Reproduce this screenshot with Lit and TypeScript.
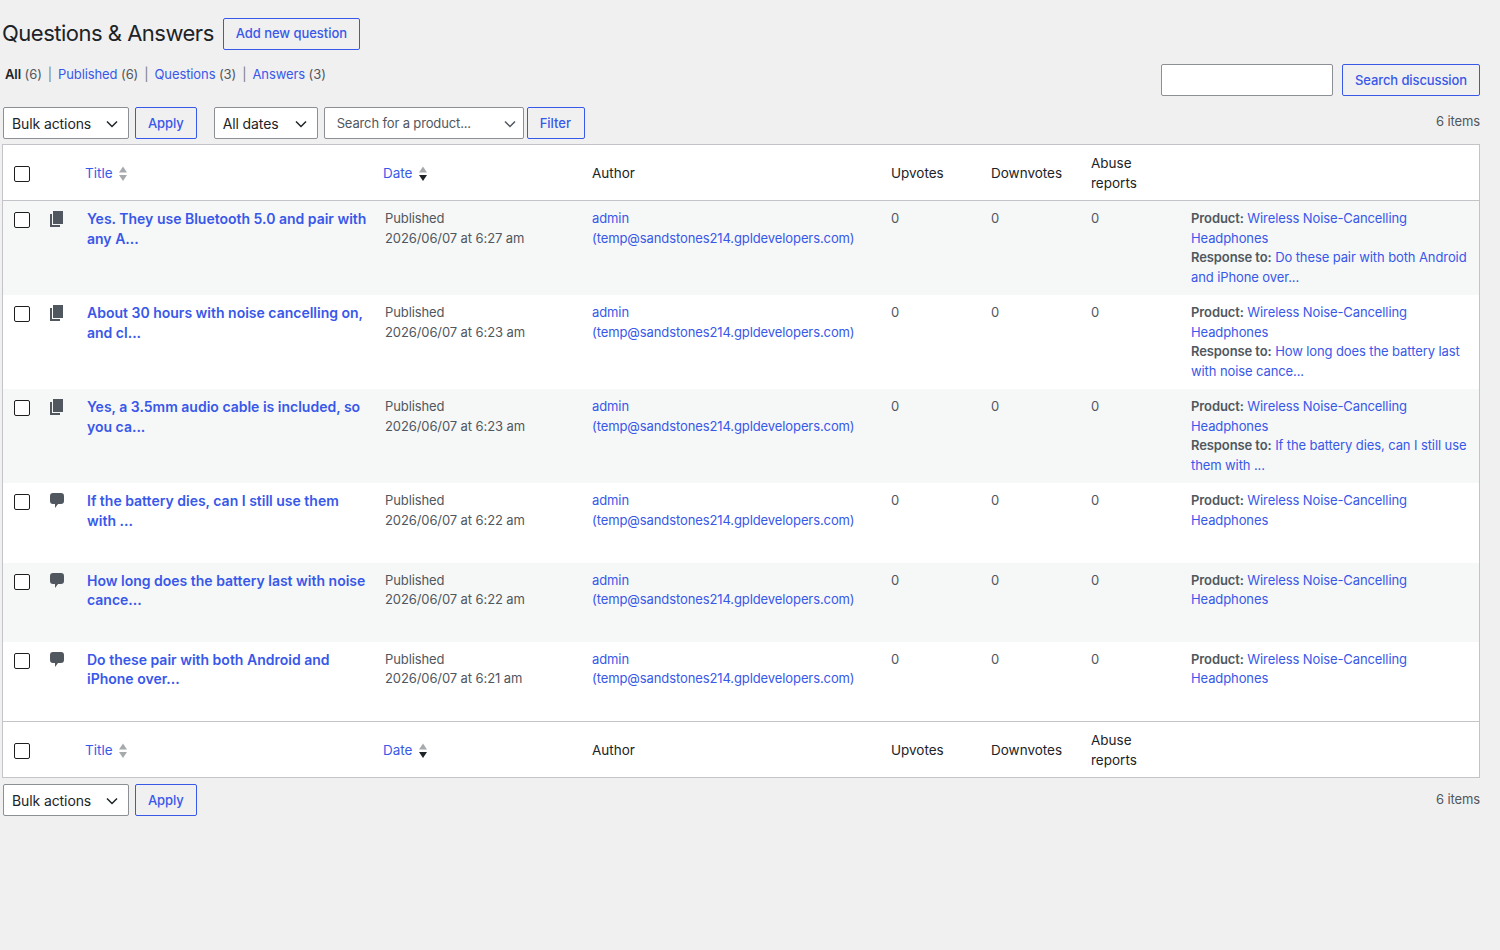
import { LitElement, html, css, svg } from 'lit';
import { customElement } from 'lit/decorators.js';

type Row = { kind: 'answer' | 'question'; title: string; date: string; response?: string };

const rows: Row[] = [
  { kind: 'answer', title: 'Yes. They use Bluetooth 5.0 and pair with any A...', date: '2026/06/07 at 6:27 am', response: 'Do these pair with both Android and iPhone over...' },
  { kind: 'answer', title: 'About 30 hours with noise cancelling on, and cl...', date: '2026/06/07 at 6:23 am', response: 'How long does the battery last with noise cance...' },
  { kind: 'answer', title: 'Yes, a 3.5mm audio cable is included, so you ca...', date: '2026/06/07 at 6:23 am', response: 'If the battery dies, can I still use them with ...' },
  { kind: 'question', title: 'If the battery dies, can I still use them with ...', date: '2026/06/07 at 6:22 am' },
  { kind: 'question', title: 'How long does the battery last with noise cance...', date: '2026/06/07 at 6:22 am' },
  { kind: 'question', title: 'Do these pair with both Android and iPhone over...', date: '2026/06/07 at 6:21 am' },
];

const chevron = html`<svg class="chev" width="12" height="8" viewBox="0 0 12 8"><path d="M1 1.5l5 5 5-5" fill="none" stroke="currentColor" stroke-width="1.5"/></svg>`;

const sortIcon = (active: boolean) => html`<svg class="sort" width="10" height="16" viewBox="0 0 10 16">
  ${svg`<path d="M5 0.5l4 6H1z" fill="#a7aaad"/><path d="M5 15l-4-6h8z" fill=${active ? '#1d2327' : '#a7aaad'}/>`}
</svg>`;

const pageIcon = html`<svg class="type" width="20" height="20" viewBox="0 0 20 20"><path d="M6 15V2h10v13H6zm-1 1h8v2H3V5h2v11z" fill="#50575e"/></svg>`;
const bubbleIcon = html`<svg class="type" width="20" height="20" viewBox="0 0 20 20"><path d="M3 5a3 3 0 0 1 3-3h8a3 3 0 0 1 3 3v5a3 3 0 0 1-3 3h-3l-3 4v-4H6a3 3 0 0 1-3-3z" fill="#50575e"/></svg>`;

@customElement('app-root')
export class AppRoot extends LitElement {
  static styles = css`
    :host {
      display: block;
      min-height: 950px;
      background: #f0f0f1;
      font-family: Inter, "Liberation Sans", sans-serif;
      font-size: 13px;
      letter-spacing: -0.1px;
      line-height: 19.5px;
      color: #50575e;
    }

    .wrap {
      padding: 18px 20px 0 2px;
    }

    a {
      color: #3858e9;
      text-decoration: none;
    }

    .head {
      display: flex;
      align-items: center;
      gap: 9px;
    }

    h1 {
      margin: 0;
      padding-bottom: 2px;
      font-size: 22px;
      letter-spacing: -0.5px;
      font-weight: 400;
      line-height: 30px;
      color: #1d2327;
    }

    .btn {
      box-sizing: border-box;
      display: inline-flex;
      align-items: center;
      height: 32px;
      padding: 1px 12px 0;
      border: 1px solid #3858e9;
      border-radius: 2px;
      color: #3858e9;
      font-weight: 500;
      white-space: nowrap;
    }

    .head .btn {
      padding-top: 0;
      letter-spacing: -0.05px;
    }

    .btn.filter {
      letter-spacing: 0;
      padding-right: 13px;
    }

    .sub-row {
      display: flex;
      justify-content: space-between;
      margin-top: 14px;
    }

    .subsub {
      padding: 0 0 0 3px;
      margin-top: 1px;
      display: flex;
      gap: 6px;
    }

    .subsub b {
      color: #1d2327;
      font-weight: 600;
    }

    .subsub .sep {
      color: #787c82;
    }

    .search {
      display: flex;
      gap: 9px;
    }

    .search .field {
      box-sizing: border-box;
      width: 172px;
      height: 32px;
      background: #fff;
      border: 1px solid #8c8f94;
      border-radius: 2px;
    }

    .nav {
      display: flex;
      justify-content: space-between;
      padding-left: 1px;
    }

    .nav.top {
      margin-top: 11px;
      margin-bottom: 5px;
    }

    .nav.bottom {
      margin-top: 6px;
    }

    .left {
      display: flex;
      gap: 6px;
    }

    .count {
      margin-top: 5px;
    }

    .bottom .count {
      margin-top: 6px;
    }

    .select {
      box-sizing: border-box;
      display: flex;
      align-items: center;
      justify-content: space-between;
      height: 32px;
      padding: 1px 10px 0 8px;
      background: #fff;
      border: 1px solid #8c8f94;
      border-radius: 2px;
      color: #1d2327;
      font-size: 14px;
    }

    .select .chev {
      color: #1d2327;
    }

    .bulk { width: 126px; }
    .dates { width: 104px; margin-left: 11px; }

    .product {
      width: 200px;
      margin-right: -3px;
      padding: 1px 7px 0 12px;
      font-size: 13px;
      letter-spacing: -0.14px;
      color: #50575e;
    }

    .product .chev {
      color: #50575e;
    }

    table {
      box-sizing: border-box;
      width: 1478px;
      table-layout: fixed;
      border-collapse: separate;
      border-spacing: 0;
      background: #fff;
      border: 1px solid #c3c4c7;
    }

    th {
      height: 55px;
      box-sizing: border-box;
      padding: 9px 10px 7px;
      text-align: left;
      font-weight: 400;
      color: #1d2327;
      font-size: 13.5px;
      letter-spacing: 0;
    }

    thead th {
      border-bottom: 1px solid #c3c4c7;
    }

    tfoot th {
      border-top: 1px solid #c3c4c7;
    }

    th.sorted {
      padding: 0;
    }

    th.sorted a {
      display: flex;
      align-items: center;
      gap: 5px;
      padding: 9px 8px 7px;
    }

    th.sorted a.date {
      gap: 6px;
    }

    .sort {
      flex: none;
    }

    td {
      padding: 8px 10px;
      vertical-align: top;
      word-wrap: break-word;
    }

    tbody tr:nth-child(odd) {
      background: #f6f7f7;
    }

    th.check {
      padding: 2px 0 0 11px;
      vertical-align: middle;
    }

    td.check {
      padding: 11px 0 0 11px;
      vertical-align: top;
    }

    input[type="checkbox"] {
      display: block;
      appearance: none;
      box-sizing: border-box;
      width: 16px;
      height: 16px;
      margin: 0;
      background: #fff;
      border: 1px solid #1e1e1e;
      border-radius: 2px;
    }

    td.kind {
      padding: 8px 0 0 8px;
    }

    .type {
      display: block;
    }

    td.title {
      font-size: 14px;
      letter-spacing: 0;
      font-weight: 600;
      padding-right: 8px;
    }

    .title a {
      display: block;
    }

    .question .title a {
      padding-bottom: 24.3px;
    }

    .question:nth-child(4) .title a {
      padding-bottom: 24.5px;
    }

    .ctx b {
      font-weight: 600;
    }
  `;

  private header() {
    return html`<tr>
      <th class="check"><input type="checkbox" /></th>
      <th></th>
      <th class="sorted"><a href="#">Title ${sortIcon(false)}</a></th>
      <th class="sorted"><a class="date" href="#">Date ${sortIcon(true)}</a></th>
      <th>Author</th>
      <th>Upvotes</th>
      <th>Downvotes</th>
      <th>Abuse reports</th>
      <th></th>
    </tr>`;
  }

  private row(r: Row) {
    return html`<tr class=${r.kind}>
      <td class="check"><input type="checkbox" /></td>
      <td class="kind">${r.kind === 'answer' ? pageIcon : bubbleIcon}</td>
      <td class="title"><a href="#">${r.title}</a></td>
      <td>Published<br />${r.date}</td>
      <td><a href="#">admin</a><br /><a href="#">(temp@sandstones214.gpldevelopers.com)</a></td>
      <td>0</td>
      <td>0</td>
      <td>0</td>
      <td class="ctx">
        <b>Product:</b> <a href="#">Wireless Noise-Cancelling Headphones</a>
        ${r.response ? html`<br /><b>Response to:</b> <a href="#">${r.response}</a>` : ''}
      </td>
    </tr>`;
  }

  render() {
    return html`
      <div class="wrap">
        <div class="head">
          <h1>Questions &amp; Answers</h1>
          <a class="btn" href="#">Add new question</a>
        </div>

        <div class="sub-row">
          <div class="subsub">
            <span><b>All</b> (6)</span><span class="sep">|</span>
            <span><a href="#">Published</a> (6)</span><span class="sep">|</span>
            <span><a href="#">Questions</a> (3)</span><span class="sep">|</span>
            <span><a href="#">Answers</a> (3)</span>
          </div>
          <div class="search">
            <div class="field"></div>
            <a class="btn" href="#">Search discussion</a>
          </div>
        </div>

        <div class="nav top">
          <div class="left">
            <div class="select bulk">Bulk actions ${chevron}</div>
            <a class="btn" href="#">Apply</a>
            <div class="select dates">All dates ${chevron}</div>
            <div class="select product">Search for a product... ${chevron}</div>
            <a class="btn filter" href="#">Filter</a>
          </div>
          <div class="count">6 items</div>
        </div>

        <table>
          <colgroup>
            <col style="width:36px" />
            <col style="width:38px" />
            <col style="width:298px" />
            <col style="width:207px" />
            <col style="width:299px" />
            <col style="width:100px" />
            <col style="width:100px" />
            <col style="width:100px" />
            <col />
          </colgroup>
          <thead>${this.header()}</thead>
          <tbody>${rows.map((r) => this.row(r))}</tbody>
          <tfoot>${this.header()}</tfoot>
        </table>

        <div class="nav bottom">
          <div class="left">
            <div class="select bulk">Bulk actions ${chevron}</div>
            <a class="btn" href="#">Apply</a>
          </div>
          <div class="count">6 items</div>
        </div>
      </div>
    `;
  }
}
